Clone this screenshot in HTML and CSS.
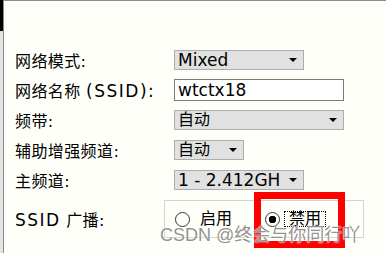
FILE: index.html
```html
<!DOCTYPE html>
<html lang="zh-CN">
<head>
  <meta charset="UTF-8">
  <meta name="viewport" content="width=device-width, initial-scale=1.0">
  <title>无线设置</title>
  <link rel="stylesheet" href="styles.css">
</head>
<body>
  <div class="frame">
    <div class="edge">
      <div class="edge-top"></div>
    </div>

    <div class="panel">
      <div class="row">
        <span class="label">网络模式:</span>
        <span class="select w130"><span class="en">Mixed</span><i class="arrow"></i></span>
      </div>
      <div class="row">
        <span class="label">网络名称 <span class="en">(SSID):</span></span>
        <span class="input"><span class="en">wtctx18</span></span>
      </div>
      <div class="row">
        <span class="label">频带:</span>
        <span class="select w170">自动<i class="arrow"></i></span>
      </div>
      <div class="row">
        <span class="label">辅助增强频道:</span>
        <span class="select w70">自动<i class="arrow"></i></span>
      </div>
      <div class="row">
        <span class="label">主频道:</span>
        <span class="select w130"><span class="en">1 - 2.412GH</span><i class="arrow"></i></span>
      </div>
      <div class="row row-radio">
        <span class="label"><span class="en">SSID</span> 广播:</span>
        <div class="radio-box">
          <label class="radio"><span class="dot"></span><span class="radio-text">启用</span></label>
          <label class="radio checked"><span class="dot"></span><span class="radio-text focus">禁用</span></label>
        </div>
      </div>
    </div>

    <!-- 标注框 -->
    <div class="mark"></div>
    <div class="watermark">CSDN @终会与你同行吖</div>
  </div>
</body>
</html>
```

FILE: styles.css
```css
body {
  margin: 0;
  padding: 0;
  background-color: #fffffa;
  font-family: "DejaVu Sans", "Noto Sans CJK SC", sans-serif;
  font-size: 16px;
  color: #000;
}

.frame {
  position: relative;
  display: flex;
  height: 253px;
  overflow: hidden;
}

.edge {
  width: 3px;
  background-color: #e4e4e4;
  border-right: 1px solid #8a8a8a;
}

.edge-top {
  height: 31px;
  background-color: #000;
}

.panel {
  flex: 1;
  border-top: 1px solid #8a8a90;
  padding: 44px 0 0 11px;
}

.row {
  display: flex;
  align-items: center;
  height: 30px;
}

.label {
  width: 159px;
  flex-shrink: 0;
  letter-spacing: 0.4px;
}

.label .en {
  letter-spacing: 1.5px;
}

.en {
  font-size: 17px;
}

.select {
  position: relative;
  box-sizing: border-box;
  height: 20px;
  line-height: 18px;
  padding-left: 3px;
  background-color: #e1e1e1;
  border: 1px solid #adadad;
}

.w130 {
  width: 130px;
}

.w170 {
  width: 170px;
}

.w70 {
  width: 70px;
}

.arrow {
  position: absolute;
  right: 6px;
  top: 7px;
  width: 0;
  height: 0;
  border-left: 4px solid transparent;
  border-right: 4px solid transparent;
  border-top: 4px solid #000;
}

.input {
  box-sizing: border-box;
  width: 170px;
  height: 22px;
  line-height: 20px;
  padding-left: 3px;
  background-color: #fff;
  border: 1px solid #7a7a7a;
}

.row-radio {
  height: 38px;
  margin-top: 5px;
}

.radio-box {
  box-sizing: border-box;
  display: flex;
  align-items: center;
  width: 200px;
  height: 38px;
  margin-left: -10px;
  padding-left: 10px;
  border: 1px solid #d4d4d4;
}

.radio {
  display: flex;
  align-items: center;
}

.radio + .radio {
  margin-left: 32px;
}

.dot {
  box-sizing: border-box;
  width: 15px;
  height: 15px;
  border: 1px solid #333;
  border-radius: 50%;
  background-color: #fff;
}

.checked .dot {
  background: radial-gradient(circle, #000 3.5px, #fff 4px);
}

.radio-text {
  margin-left: 9px;
  padding: 0 1px;
  line-height: 18px;
}

.focus {
  margin-left: 4px;
  padding: 0 4px;
  line-height: 14px;
  border: 1px dotted #000;
}

.mark {
  position: absolute;
  left: 254px;
  top: 192px;
  width: 91px;
  height: 56px;
  box-sizing: border-box;
  border: 7px solid #ff0000;
}

.watermark {
  position: absolute;
  left: 160px;
  top: 220px;
  font-family: "Liberation Sans", "Noto Sans CJK SC", sans-serif;
  font-size: 18px;
  color: rgba(110, 110, 110, 0.75);
  text-shadow: 0 0 1px #fff, 0 0 2px #fff;
  white-space: nowrap;
}
```
